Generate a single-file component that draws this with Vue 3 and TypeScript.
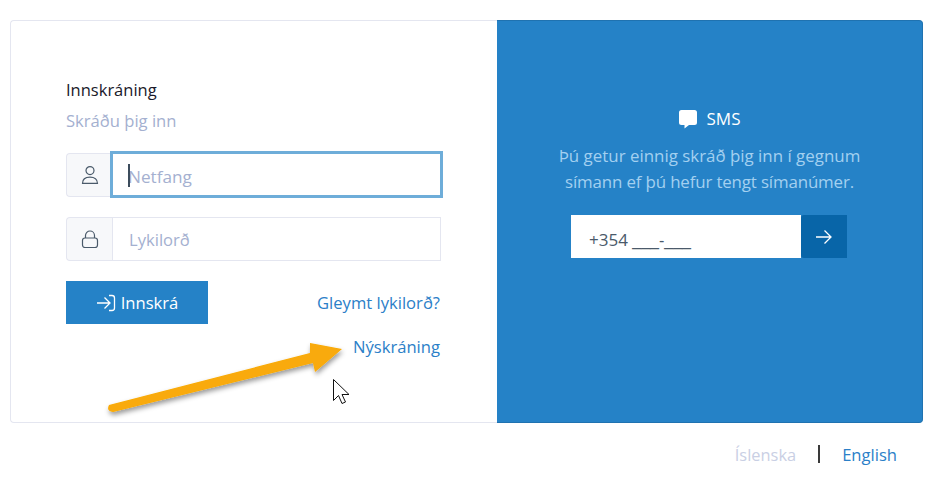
<template>
  <div class="page">
    <div class="card">
      <section class="login">
        <h1 class="title">Innskráning</h1>
        <p class="subtitle">Skráðu þig inn</p>

        <div class="field">
          <span class="addon">
            <svg width="18" height="20" viewBox="0 0 18 20" fill="none" stroke="#4a5a6a" stroke-width="1.2">
              <circle cx="9" cy="5.6" r="4" />
              <path d="M1.5 18.4c0-4.2 3-6.2 7.5-6.2s7.5 2 7.5 6.2z" />
            </svg>
          </span>
          <div class="input focused"><i class="caret"></i>Netfang</div>
        </div>

        <div class="field">
          <span class="addon">
            <svg width="18" height="20" viewBox="0 0 18 20" fill="none" stroke="#4a5a6a" stroke-width="1.2">
              <path d="M4.5 9V6.5a4.5 4.5 0 0 1 9 0V9" />
              <rect x="1.5" y="9" width="15" height="9.5" rx="2.5" />
            </svg>
          </span>
          <div class="input">Lykilorð</div>
        </div>

        <div class="actions">
          <button class="submit">
            <svg width="20" height="18" viewBox="0 0 20 18" fill="none" stroke="#fff" stroke-width="1.3">
              <path d="M1 9h12M8.5 3.5 14 9l-5.5 5.5M13 1.5h3a2.5 2.5 0 0 1 2.5 2.5v10a2.5 2.5 0 0 1-2.5 2.5h-3" />
            </svg>
            Innskrá
          </button>
          <div class="links">
            <a class="link">Gleymt lykilorð?</a>
            <a class="link">Nýskráning</a>
          </div>
        </div>

        <svg class="arrow" width="250" height="90" viewBox="0 0 250 90">
          <defs>
            <filter id="shadow" x="-10%" y="-20%" width="120%" height="150%">
              <feDropShadow dx="1" dy="3" stdDeviation="2.5" flood-color="#000" flood-opacity="0.4" />
            </filter>
          </defs>
          <path
            d="M6 72 L207 20 L207 10 L239 16 L212 39 L210 30 L10 79 Q3 78 6 72 Z"
            fill="#f9aa07"
            filter="url(#shadow)"
          />
        </svg>
        <svg class="cursor" width="20" height="28" viewBox="0 0 20 28">
          <path d="M1.5 1.5v21l5-5 3.5 8 3.5-1.5-3.5-7.5h7z" fill="#fff" stroke="#111" stroke-width="1" />
        </svg>
      </section>

      <section class="sms">
        <h2 class="sms-title">
          <svg width="20" height="20" viewBox="0 0 20 20" fill="#fff">
            <path d="M3.5 1h13A2.5 2.5 0 0 1 19 3.5v10a2.5 2.5 0 0 1-2.5 2.5H11l-4.500 3.500V16H3.500A2.500 2.500 0 0 1 1 13.500v-10A2.500 2.500 0 0 1 3.500 1z" />
          </svg>
          SMS
        </h2>
        <p class="sms-text">Þú getur einnig skráð þig inn í gegnum<br /><span class="tight">símann ef þú hefur tengt símanúmer.</span></p>
        <div class="phone">
          <div class="phone-input">+354 <span class="mask">___-___</span></div>
          <button class="phone-go">
            <svg width="18" height="16" viewBox="0 0 18 16" fill="none" stroke="#fff" stroke-width="1.3">
              <path d="M1 8h15M9.500 1.500 16 8l-6.500 6.500" />
            </svg>
          </button>
        </div>
      </section>
    </div>

    <footer class="langs">
      <a class="lang off">Íslenska</a>
      <i class="sep"></i>
      <a class="lang">English</a>
    </footer>
  </div>
</template>

<script setup lang="ts">
</script>

<style>
html,
body {
  margin: 0;
  background: #fff;
}
</style>

<style scoped>
.page {
  padding: 20px 24px 0 10px;
  font-family: "Open Sans", "Noto Sans", sans-serif;
  font-size: 16.6px;
}

.card {
  display: flex;
  height: 403px;
  box-sizing: border-box;
}

.login {
  position: relative;
  width: 487px;
  box-sizing: border-box;
  padding: 58px 56px 0 55px;
  border: 1px solid #e4e6f0;
  border-right: 0;
  border-radius: 4px 0 0 4px;
}

.title {
  margin: 0;
  font-size: 16.5px;
  font-weight: 400;
  line-height: 22px;
  color: #1a1a2a;
}

.subtitle {
  margin: 9px 0 0;
  line-height: 22px;
  color: #a4b0d0;
}

.field {
  display: flex;
  width: 375px;
  height: 44px;
  margin-top: 20px;
}

.subtitle + .field {
  margin-top: 21px;
}

.addon {
  display: flex;
  align-items: center;
  justify-content: center;
  width: 46px;
  box-sizing: border-box;
  background: #f7f8fa;
  border: 1px solid #e4e6f0;
  border-right: 0;
  border-radius: 4px 0 0 4px;
}

.input {
  position: relative;
  display: flex;
  align-items: center;
  flex: 1;
  box-sizing: border-box;
  padding-left: 16px;
  background: #fff;
  border: 1px solid #e4e6f0;
  color: #a4b0d0;
}

.input.focused {
  margin: -2px -2px -1px -2px;
  padding: 3px 0 0 15px;
  border: 3px solid #6eadd9;
  font-size: 17.2px;
}

.caret {
  position: absolute;
  left: 15px;
  top: 10px;
  width: 2px;
  height: 23px;
  background: #3c4c5c;
}

.actions {
  display: flex;
  justify-content: space-between;
  margin-top: 20px;
}

.submit {
  display: flex;
  align-items: center;
  justify-content: center;
  gap: 5px;
  width: 142px;
  height: 43px;
  padding: 0;
  border: 0;
  background: #2582c7;
  color: #fff;
  font: inherit;
}

.links {
  display: flex;
  flex-direction: column;
  align-items: flex-end;
  gap: 22px;
  padding-top: 11px;
  padding-right: 1px;
}

.link {
  line-height: 22px;
  color: #2b80c8;
}

.arrow {
  position: absolute;
  left: 92px;
  top: 312px;
}

.cursor {
  position: absolute;
  left: 321px;
  top: 357px;
}

.sms {
  flex: 1;
  box-sizing: border-box;
  padding-top: 87px;
  background: #2582c7;
  border: 1px solid #1f72b0;
  border-left: 0;
  border-radius: 0 4px 4px 0;
  text-align: center;
}

.sms-title {
  display: flex;
  align-items: center;
  justify-content: center;
  gap: 9px;
  margin: 0 0 0 -1px;
  font-size: 17px;
  font-weight: 400;
  line-height: 22px;
  color: #fff;
}

.sms-text {
  margin: 13px 0 0;
  font-size: 16.9px;
  line-height: 26px;
  color: #a3d0f0;
}

.tight {
  letter-spacing: -0.15px;
}

.phone {
  display: flex;
  width: 276px;
  height: 43px;
  margin: 20px 0 0 74px;
}

.phone-input {
  flex: 1;
  box-sizing: border-box;
  padding-left: 18px;
  background: #fff;
  color: #4a5a6a;
  font-size: 17px;
  line-height: 49px;
  text-align: left;
}

.mask {
  font-family: "Liberation Sans", sans-serif;
  font-size: 16px;
}

.phone-go {
  display: flex;
  align-items: center;
  justify-content: center;
  width: 46px;
  padding: 0;
  border: 0;
  border-radius: 3px 0 0 3px;
  background: #0865a8;
}

.langs {
  display: flex;
  align-items: center;
  justify-content: flex-end;
  height: 22px;
  margin-top: 21px;
  padding-right: 26px;
}

.lang {
  line-height: 22px;
  color: #2b80c8;
}

.lang.off {
  font-size: 16.4px;
  color: #c9cfe4;
}

.sep {
  width: 2px;
  height: 18px;
  margin: -2px 22px 0;
  background: #3a3a3a;
}
</style>
